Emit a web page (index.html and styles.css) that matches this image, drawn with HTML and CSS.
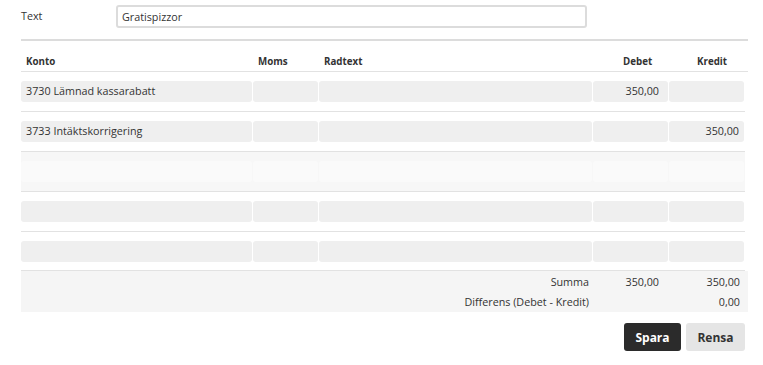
FILE: index.html
```html
<!DOCTYPE html>
<html lang="sv">
<head>
    <meta charset="UTF-8">
    <meta name="viewport" content="width=device-width, initial-scale=1.0">
    <title>Verifikation</title>
    <link rel="stylesheet" href="styles.css">
</head>
<body>
    <div class="voucher">
        <div class="field-row">
            <label for="voucherText">Text</label>
            <input type="text" id="voucherText" name="voucherText" value="Gratispizzor">
        </div>

        <div class="ledger">
            <div class="ledger-head">
                <div>Konto</div>
                <div>Moms</div>
                <div>Radtext</div>
                <div class="head-debet">Debet</div>
                <div class="head-kredit">Kredit</div>
            </div>

            <div class="ledger-row">
                <div class="cell">3730 Lämnad kassarabatt</div>
                <div class="cell"></div>
                <div class="cell"></div>
                <div class="cell num debet">350,00</div>
                <div class="cell num kredit"></div>
            </div>
            <div class="ledger-row">
                <div class="cell">3733 Intäktskorrigering</div>
                <div class="cell"></div>
                <div class="cell"></div>
                <div class="cell num debet"></div>
                <div class="cell num kredit">350,00</div>
            </div>
            <div class="ledger-row hover">
                <div class="cell"></div>
                <div class="cell"></div>
                <div class="cell"></div>
                <div class="cell"></div>
                <div class="cell"></div>
            </div>
            <div class="ledger-row">
                <div class="cell"></div>
                <div class="cell"></div>
                <div class="cell"></div>
                <div class="cell"></div>
                <div class="cell"></div>
            </div>
            <div class="ledger-row last">
                <div class="cell"></div>
                <div class="cell"></div>
                <div class="cell"></div>
                <div class="cell"></div>
                <div class="cell"></div>
            </div>

            <div class="ledger-sum">
                <div class="sum-label">Summa</div>
                <div class="sum-debet">350,00</div>
                <div class="sum-kredit">350,00</div>
                <div class="sum-label">Differens (Debet - Kredit)</div>
                <div class="sum-debet"></div>
                <div class="sum-kredit">0,00</div>
            </div>
        </div>

        <div class="actions">
            <button type="submit" class="save-btn">Spara</button>
            <button type="reset" class="clear-btn">Rensa</button>
        </div>
    </div>
</body>
</html>
```

FILE: styles.css
```css
body {
    font-family: "Open Sans", Arial, sans-serif;
    font-size: 10.75px;
    color: #333;
    background: #fff;
    margin: 0;
}
.voucher {
    width: 727px;
    padding: 5px 0 0 21px;
}
.field-row {
    display: flex;
    align-items: center;
    height: 23px;
}
.field-row label {
    width: 95px;
    margin-top: -2px;
}
.field-row input {
    width: 471px;
    height: 23px;
    box-sizing: border-box;
    border: 2px solid #dcdcdc;
    border-radius: 3px;
    padding: 0 4px;
    font-family: inherit;
    font-size: 10.75px;
    color: #333;
}
.ledger {
    margin-top: 11px;
    border-top: 2px solid #dcdcdc;
}
.ledger-head,
.ledger-row,
.ledger-sum {
    display: grid;
    grid-template-columns: 231px 65px 273px 75px 75px;
    column-gap: 1px;
}
.ledger-head {
    padding: 13px 0 2px;
    line-height: 15px;
    font-size: 9.75px;
    font-weight: bold;
    border-bottom: 1px solid #e2e2e2;
}
.ledger-head div {
    padding-left: 5px;
}
.ledger-head .head-debet {
    padding-left: 30px;
}
.ledger-head .head-kredit {
    padding-left: 28px;
}
.ledger-row {
    width: 724px;
    padding: 9px 0;
    border-bottom: 1px solid #e2e2e2;
}
.ledger-row.last {
    padding-bottom: 8px;
}
.cell {
    height: 21px;
    line-height: 20px;
    padding: 0 5px;
    background: #efefef;
    border-radius: 3px;
}
.num {
    text-align: right;
}
.cell.debet {
    padding-right: 9px;
}
.cell.kredit {
    padding-right: 5px;
}
.ledger-row.hover {
    background: #f7f7f7; /* rad under muspekaren */
}
.ledger-row.hover .cell {
    background: #fafafa;
}
.ledger-sum {
    background: #f5f5f5;
    padding: 1px 0 0;
    height: 40px;
    grid-auto-rows: 20px;
    line-height: 20px;
}
.sum-label {
    grid-column: 1 / 4;
    text-align: right;
    padding-right: 3px;
}
.sum-debet {
    text-align: right;
    padding-right: 9px;
}
.sum-kredit {
    text-align: right;
    padding-right: 4px;
}
.actions {
    width: 724px;
    display: flex;
    justify-content: flex-end;
    gap: 5px;
    margin-top: 11px;
}
button {
    height: 28px;
    border: none;
    border-radius: 3px;
    font-family: inherit;
    font-size: 12px;
    font-weight: bold;
    cursor: pointer;
}
.save-btn {
    width: 57px;
    background-color: #2b2b2b;
    color: #fff;
}
.clear-btn {
    width: 59px;
    background-color: #e5e5e5;
    color: #333;
}
```
